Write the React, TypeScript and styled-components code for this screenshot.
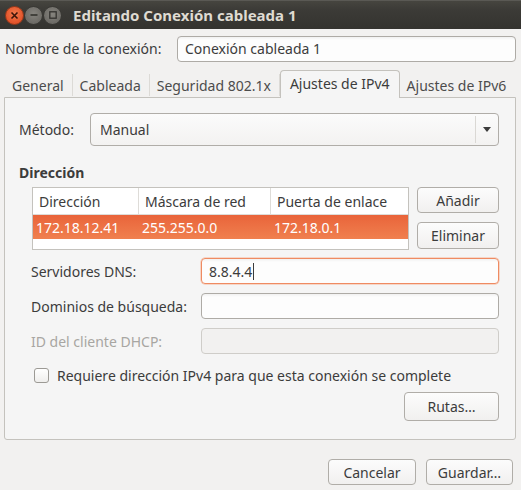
import React from "react";
import styled, { createGlobalStyle } from "styled-components";

const Global = createGlobalStyle`
  html, body { margin: 0; padding: 0; background: #f2f1f0; }
  body { font-family: "Noto Sans", "Open Sans", sans-serif; }
  * { box-sizing: border-box; }
`;

const Window = styled.div`
  width: 521px;
  height: 490px;
  background: #f2f1f0;
  display: flex;
  flex-direction: column;
  color: #3c3c3c;
  font-size: 14px;
  overflow: hidden;
`;

const TitleBar = styled.div`
  height: 29px;
  flex: none;
  background: linear-gradient(#46453f, #3c3b37 30%, #34332f);
  border-top: 1px solid #5a5954;
  display: flex;
  align-items: center;
  padding-left: 5px;
`;

const WinButton = styled.div<{ $close?: boolean }>`
  width: 19px;
  height: 19px;
  border-radius: 50%;
  display: flex;
  align-items: center;
  justify-content: center;
  background: ${(p) =>
    p.$close
      ? "radial-gradient(circle at 50% 40%, #f27a4c, #e2532a 70%, #c9461f)"
      : "radial-gradient(circle at 50% 40%, #86847e, #6b6964 75%, #5a5853)"};
  border: 1px solid ${(p) => (p.$close ? "#9a3a1b" : "#3a3935")};
`;

const Title = styled.div`
  margin-left: 11px;
  font-weight: bold;
  font-size: 15px;
  color: #dfdbd2;
`;

const Body = styled.div`
  flex: 1;
  display: flex;
  flex-direction: column;
  padding: 6px 5px 0 4px;
`;

const NameRow = styled.div`
  display: flex;
  align-items: center;
  height: 27px;
  margin-bottom: 8px;
  padding-left: 1px;
`;

const NameLabel = styled.div`
  width: 172px;
  flex: none;
`;

const Entry = styled.div<{ $focus?: boolean; $disabled?: boolean }>`
  height: 26px;
  flex: 1;
  border: 1px solid
    ${(p) => (p.$focus ? "#ef8b62" : p.$disabled ? "#cfcdc9" : "#aeaba6")};
  border-radius: 4px;
  background: ${(p) =>
    p.$disabled
      ? "#f2f1f0"
      : "linear-gradient(#f1f1f1, #fdfdfd 3px, #fdfdfd)"};
  box-shadow: ${(p) => (p.$focus ? "0 0 0 0.5px #f7b89c" : "none")};
  display: flex;
  align-items: center;
  padding-left: 7px;
  color: #3c3c3c;
`;

const Caret = styled.span`
  display: inline-block;
  width: 1px;
  height: 17px;
  background: #3c3c3c;
  margin-left: 1px;
`;

const Notebook = styled.div`
  display: flex;
  flex-direction: column;
`;

const TabStrip = styled.div`
  display: flex;
  align-items: flex-end;
  height: 27px;
  padding-left: 1px;
`;

const Tab = styled.div<{ $active?: boolean; $last?: boolean }>`
  height: ${(p) => (p.$active ? "28px" : "22px")};
  margin-bottom: ${(p) => (p.$active ? "-1px" : "1px")};
  display: flex;
  align-items: center;
  padding: ${(p) => (p.$active ? "0 9px 3px 9px" : "0 8px 0 7px")};
  border-right: ${(p) => (p.$active || p.$last ? "none" : "1px solid #dcdad6")};
  ${(p) =>
    p.$active
      ? `background: #f5f5f5;
         border: 1px solid #c4c2bd;
         border-bottom: none;
         border-radius: 4px 4px 0 0;
         color: #3c3c3c;`
      : `color: #4c4c4c;`}
  position: relative;
  z-index: ${(p) => (p.$active ? 1 : 0)};
`;

const Panel = styled.div`
  height: 343px;
  background: #f5f5f5;
  border: 1px solid #c4c2bd;
  border-radius: 0 0 3px 3px;
  padding: 15px 16px 0 14px;
  display: flex;
  flex-direction: column;
`;

const MethodRow = styled.div`
  display: flex;
  align-items: center;
  height: 33px;
`;

const MethodLabel = styled.div`
  width: 71px;
  flex: none;
`;

const Combo = styled.div`
  flex: 1;
  height: 33px;
  border: 1px solid #b0ada8;
  border-radius: 4px;
  background: linear-gradient(#fbfbfb, #f3f2f1);
  display: flex;
  align-items: center;
  padding-left: 9px;
`;

const ComboText = styled.div`
  flex: 1;
`;

const ComboSep = styled.div`
  width: 1px;
  height: 27px;
  background: #dad8d4;
`;

const ComboArrow = styled.div`
  width: 22px;
  display: flex;
  justify-content: center;
`;

const Heading = styled.div`
  font-weight: bold;
  margin-top: 19px;
  height: 16px;
  line-height: 16px;
`;

const AddressArea = styled.div`
  display: flex;
  margin-top: 6px;
  padding-left: 13px;
  gap: 8px;
`;

const Table = styled.div`
  flex: 1;
  height: 63px;
  border: 1px solid #c4c2bd;
  background: #ffffff;
  display: flex;
  flex-direction: column;
`;

const TRow = styled.div<{ $head?: boolean; $sel?: boolean }>`
  display: grid;
  grid-template-columns: 106px 132px 1fr;
  height: ${(p) => (p.$head ? "27px" : "24px")};
  border-bottom: ${(p) => (p.$head ? "1px solid #dedcd8" : "none")};
  background: ${(p) =>
    p.$sel ? "linear-gradient(#e9643a, #f0804f)" : "#ffffff"};
  color: ${(p) => (p.$sel ? "#ffffff" : "#3c3c3c")};
`;

const TCell = styled.div<{ $head?: boolean; $sep?: boolean }>`
  display: flex;
  align-items: center;
  padding-left: ${(p) => (p.$head ? "6px" : "3px")};
  border-right: ${(p) => (p.$sep ? "1px solid #dedcd8" : "none")};
  white-space: nowrap;
`;

const SideButtons = styled.div`
  display: flex;
  flex-direction: column;
  gap: 9px;
`;

const Button = styled.div<{ $w: number; $h?: number }>`
  width: ${(p) => p.$w}px;
  height: ${(p) => p.$h ?? 27}px;
  border: 1px solid #b0ada8;
  border-radius: 4px;
  background: linear-gradient(#fcfcfc, #f1f0ef);
  display: flex;
  align-items: center;
  justify-content: center;
  color: #3c3c3c;
`;

const FieldGrid = styled.div`
  display: grid;
  grid-template-columns: 170px 1fr;
  row-gap: 9px;
  margin-top: 8px;
  padding-left: 12px;
  align-items: center;
`;

const FieldLabel = styled.div<{ $disabled?: boolean }>`
  color: ${(p) => (p.$disabled ? "#a8a6a2" : "#3c3c3c")};
`;

const CheckRow = styled.div`
  display: flex;
  align-items: center;
  margin-top: 13px;
  padding-left: 15px;
  gap: 8px;
  height: 16px;
`;

const CheckBox = styled.div`
  width: 15px;
  height: 15px;
  border: 1px solid #9c9a95;
  border-radius: 3px;
  background: linear-gradient(#ffffff, #efeeec);
`;

const RoutesRow = styled.div`
  display: flex;
  justify-content: flex-end;
  margin-top: 9px;
`;

const Footer = styled.div`
  display: flex;
  justify-content: flex-end;
  gap: 10px;
  margin-top: 19px;
  padding-right: 3px;
`;

export default function App() {
  return (
    <>
      <Global />
      <Window>
        <TitleBar>
          <WinButton $close>
            <svg width="9" height="9" viewBox="0 0 9 9">
              <path d="M1.5 1.5 L7.5 7.5 M7.5 1.5 L1.5 7.5" stroke="#3d1509" strokeWidth="1.6" />
            </svg>
          </WinButton>
          <WinButton>
            <svg width="10" height="10" viewBox="0 0 10 10">
              <path d="M1.5 5 H8.5" stroke="#33322e" strokeWidth="1.6" />
            </svg>
          </WinButton>
          <WinButton>
            <svg width="10" height="10" viewBox="0 0 10 10">
              <rect x="1.8" y="1.8" width="6.4" height="6.4" fill="none" stroke="#33322e" strokeWidth="1.3" />
            </svg>
          </WinButton>
          <Title>Editando Conexión cableada 1</Title>
        </TitleBar>
        <Body>
          <NameRow>
            <NameLabel>Nombre de la conexión:</NameLabel>
            <Entry>Conexión cableada 1</Entry>
          </NameRow>
          <Notebook>
            <TabStrip>
              <Tab>General</Tab>
              <Tab>Cableada</Tab>
              <Tab>Seguridad 802.1x</Tab>
              <Tab $active>Ajustes de IPv4</Tab>
              <Tab $last>Ajustes de IPv6</Tab>
            </TabStrip>
            <Panel>
              <MethodRow>
                <MethodLabel>Método:</MethodLabel>
                <Combo>
                  <ComboText>Manual</ComboText>
                  <ComboSep />
                  <ComboArrow>
                    <svg width="8" height="5" viewBox="0 0 8 5">
                      <path d="M0 0 H8 L4 5 Z" fill="#3c3c3c" />
                    </svg>
                  </ComboArrow>
                </Combo>
              </MethodRow>
              <Heading>Dirección</Heading>
              <AddressArea>
                <Table>
                  <TRow $head>
                    <TCell $head $sep>Dirección</TCell>
                    <TCell $head $sep>Máscara de red</TCell>
                    <TCell $head>Puerta de enlace</TCell>
                  </TRow>
                  <TRow $sel>
                    <TCell>172.18.12.41</TCell>
                    <TCell>255.255.0.0</TCell>
                    <TCell>172.18.0.1</TCell>
                  </TRow>
                </Table>
                <SideButtons>
                  <Button $w={82} $h={26}>Añadir</Button>
                  <Button $w={82} $h={27}>Eliminar</Button>
                </SideButtons>
              </AddressArea>
              <FieldGrid>
                <FieldLabel>Servidores DNS:</FieldLabel>
                <Entry $focus>
                  8.8.4.4<Caret />
                </Entry>
                <FieldLabel>Dominios de búsqueda:</FieldLabel>
                <Entry />
                <FieldLabel $disabled>ID del cliente DHCP:</FieldLabel>
                <Entry $disabled />
              </FieldGrid>
              <CheckRow>
                <CheckBox />
                <span>Requiere dirección IPv4 para que esta conexión se complete</span>
              </CheckRow>
              <RoutesRow>
                <Button $w={95} $h={29}>Rutas…</Button>
              </RoutesRow>
            </Panel>
          </Notebook>
          <Footer>
            <Button $w={88} $h={26}>Cancelar</Button>
            <Button $w={87} $h={26}>Guardar…</Button>
          </Footer>
        </Body>
      </Window>
    </>
  );
}
